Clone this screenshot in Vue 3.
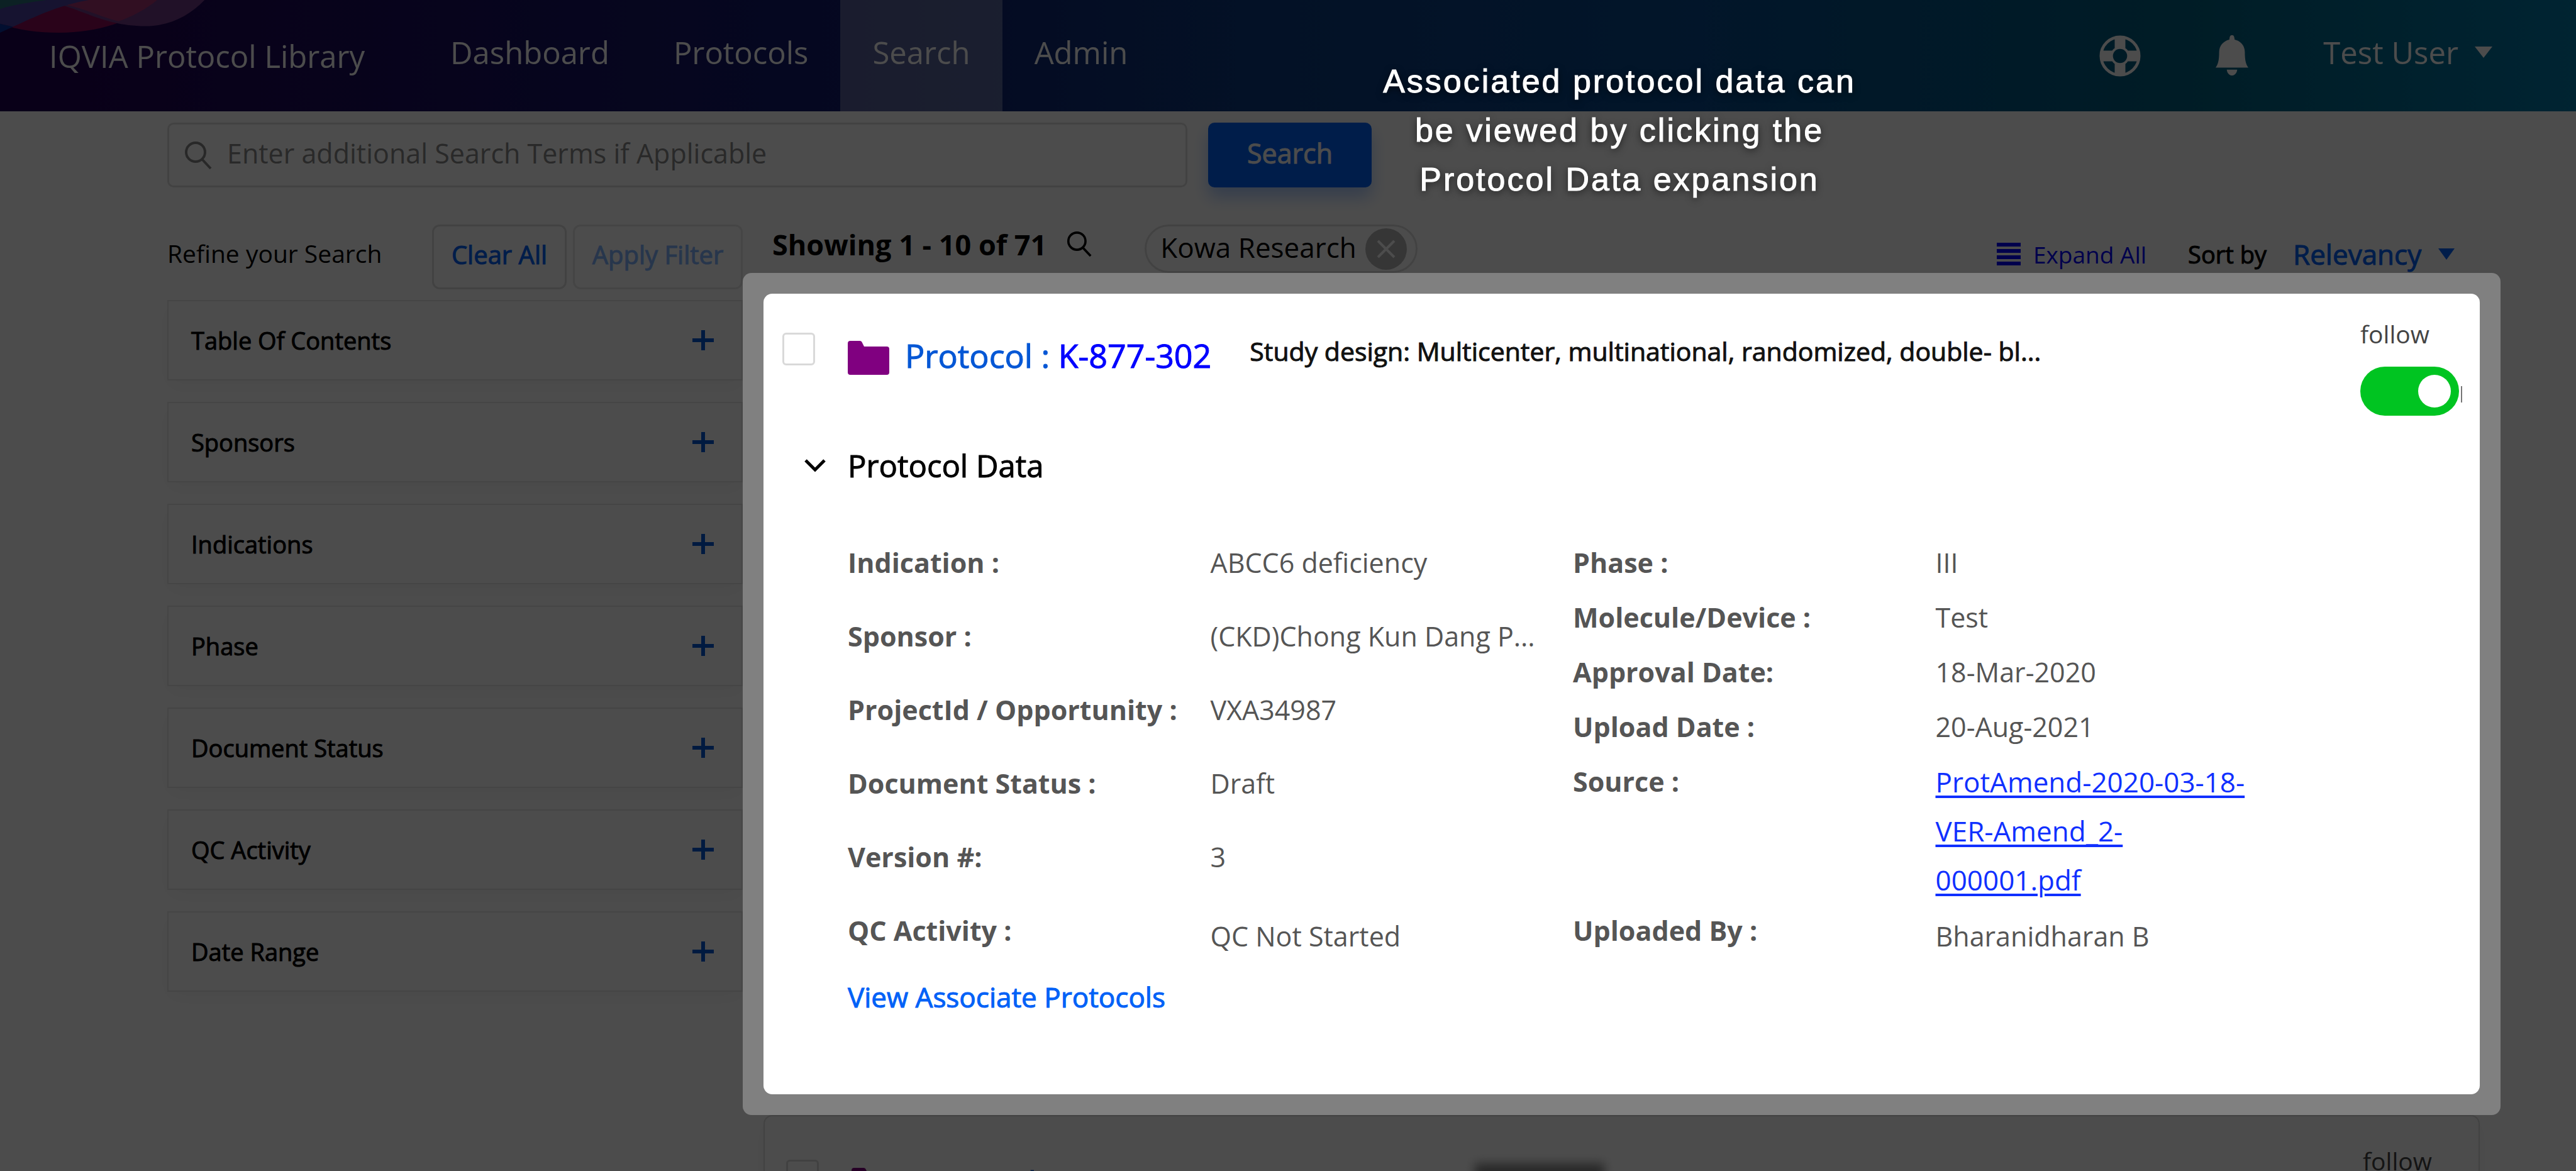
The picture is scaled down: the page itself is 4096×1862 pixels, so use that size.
<script setup>
import { ref } from 'vue'

const navItems = ['Dashboard', 'Protocols', 'Search', 'Admin']
const activeNav = 'Search'

const filters = [
  'Table Of Contents',
  'Sponsors',
  'Indications',
  'Phase',
  'Document Status',
  'QC Activity',
  'Date Range',
]

const leftDetails = [
  { label: 'Indication :', value: 'ABCC6 deficiency' },
  { label: 'Sponsor :', value: '(CKD)Chong Kun Dang P...' },
  { label: 'ProjectId / Opportunity :', value: 'VXA34987' },
  { label: 'Document Status :', value: 'Draft' },
  { label: 'Version #:', value: '3' },
  { label: 'QC Activity :', value: 'QC Not Started', lowered: true },
]

const rightDetails = [
  { label: 'Phase :', value: 'III' },
  { label: 'Molecule/Device :', value: 'Test' },
  { label: 'Approval Date:', value: '18-Mar-2020' },
  { label: 'Upload Date :', value: '20-Aug-2021' },
  { label: 'Source :', file: ['ProtAmend-2020-03-18-', 'VER-Amend_2-', '000001.pdf'] },
  { label: 'Uploaded By :', value: 'Bharanidharan B', lowered: true },
]

const searchTerm = ref('')
const sortBy = ref('Relevancy')
const following = ref(true)
const followingNext = ref(false)
const selected = ref(false)
const selectedNext = ref(false)
</script>

<template>
  <div class="page">
    <header class="topbar">
      <svg class="swirl" viewBox="0 0 350 56" aria-hidden="true">
        <path d="M0 0H265C225 36 165 55 100 55C65 55 30 51 0 40Z" fill="#8c0d58" />
        <path d="M60 0C130 6 165 44 245 44C285 44 318 28 345 0Z" fill="#6e3985" />
        <path d="M60 0C130 6 160 26 200 36C225 27 247 15 265 0Z" fill="#a63273" />
        <path d="M0 0H150C95 10 60 28 22 45L0 40Z" fill="#4a42a0" />
        <path d="M0 40L22 45L0 55Z" fill="#0835a0" />
        <path d="M0 0H78C50 4 22 8 0 15Z" fill="#287178" />
      </svg>
      <a class="brand" href="#">IQVIA Protocol Library</a>
      <nav class="nav">
        <a
          v-for="item in navItems"
          :key="item"
          href="#"
          class="nav-item"
          :class="{ active: item === activeNav }"
        >{{ item }}</a>
      </nav>
      <div class="tools">
        <button class="icon-button" aria-label="Help">
          <svg class="ring-icon" viewBox="0 0 70 70">
            <g fill="none" stroke="currentColor">
              <circle cx="35" cy="35" r="32" stroke-width="5" />
              <circle cx="35" cy="35" r="14" stroke-width="4" />
              <path d="M35 2V22M35 48V68M2 35H22M48 35H68" stroke-width="18" />
            </g>
          </svg>
        </button>
        <button class="icon-button" aria-label="Notifications">
          <svg class="bell-icon" viewBox="0 0 56 70">
            <path
              d="M28 0C31 0 32 2 32.500 7.500C43 10 50 18 50 29C50 43 52 50 56 55.500H0C4 50 6 43 6 29C6 18 13 10 23.500 7.500C24 2 25 0 28 0ZM19 59H37C36 66 32 69 28 69C24 69 20 66 19 59Z"
              fill="currentColor"
            />
          </svg>
        </button>
        <button class="user-menu">
          <span>Test User</span>
          <svg class="user-caret" viewBox="0 0 28 18"><path d="M0 0H28L14 18Z" fill="currentColor" /></svg>
        </button>
      </div>
    </header>

    <form class="searchbar" @submit.prevent>
      <label class="search-field">
        <svg class="search-icon" viewBox="0 0 44 46">
          <g fill="none" stroke="currentColor" stroke-width="4">
            <circle cx="18" cy="18" r="15" />
            <path d="M28 29L42 44" />
          </g>
        </svg>
        <input
          v-model="searchTerm"
          class="search-input"
          type="text"
          aria-label="Search terms"
          placeholder="Enter additional Search Terms if Applicable"
        />
      </label>
      <button class="search-button medium" type="submit">Search</button>
    </form>

    <div class="columns">
      <aside class="sidebar">
        <div class="refine">
          <span class="refine-title">Refine your Search</span>
          <button class="refine-button medium">Clear All</button>
          <button class="refine-button apply medium" disabled>Apply Filter</button>
        </div>
        <div class="filters">
          <button v-for="name in filters" :key="name" class="filter medium">
            <span>{{ name }}</span>
            <svg class="plus" viewBox="0 0 34 34">
              <path d="M17 1V33M0 17H34" fill="none" stroke="currentColor" stroke-width="6" />
            </svg>
          </button>
        </div>
      </aside>

      <main class="results">
        <div class="results-head">
          <h1 class="count">Showing 1 - 10 of 71</h1>
          <svg class="count-icon" viewBox="0 0 44 46">
            <g fill="none" stroke="currentColor" stroke-width="4">
              <circle cx="18" cy="18" r="15" />
              <path d="M28 29L42 44" />
            </g>
          </svg>
          <div class="chip">
            <span class="chip-text">Kowa Research</span>
            <button class="chip-close" aria-label="Remove Kowa Research">
              <svg viewBox="0 0 66 66">
                <path d="M20 20L46 46M46 20L20 46" fill="none" stroke="currentColor" stroke-width="4" />
              </svg>
            </button>
          </div>
          <div class="sorting">
            <a class="expand" href="#">
              <svg class="bars" viewBox="0 0 38 36">
                <path d="M0 3H38M0 13H38M0 23H38M0 33H38" stroke="currentColor" stroke-width="6" />
              </svg>
              <span>Expand All</span>
            </a>
            <label class="sort-label medium" for="sort">Sort by</label>
            <span class="sort-control">
              <select id="sort" v-model="sortBy" class="sort medium">
                <option>Relevancy</option>
              </select>
              <svg class="sort-caret" viewBox="0 0 26 18"><path d="M0 0H26L13 18Z" fill="currentColor" /></svg>
            </span>
          </div>
        </div>

        <div class="spotlight">
          <article class="card">
            <div class="card-head">
              <input v-model="selected" class="tick" type="checkbox" aria-label="Select protocol K-877-302" />
              <svg class="folder" viewBox="0 0 66 54">
                <path d="M4 0H19Q22 0 23 3L26 9H62Q66 9 66 13V50Q66 54 62 54H4Q0 54 0 50V4Q0 0 4 0Z" fill="currentColor" />
              </svg>
              <h2 class="title medium">Protocol : <a class="title-link" href="#">K-877-302</a></h2>
              <p class="summary medium">Study design: Multicenter, multinational, randomized, double- bl...</p>
              <label class="follow">
                <span>follow</span>
                <input v-model="following" class="switch" type="checkbox" role="switch" />
              </label>
            </div>

            <button class="section-toggle medium">
              <svg class="chevron" viewBox="0 0 34 22">
                <path d="M2 3L17 18L32 3" fill="none" stroke="currentColor" stroke-width="5" />
              </svg>
              <span>Protocol Data</span>
            </button>

            <div class="details">
              <dl class="detail-list spaced">
                <div v-for="row in leftDetails" :key="row.label" class="detail">
                  <dt>{{ row.label }}</dt>
                  <dd :class="{ lowered: row.lowered }">{{ row.value }}</dd>
                </div>
              </dl>
              <dl class="detail-list">
                <div v-for="row in rightDetails" :key="row.label" class="detail" :class="{ file: row.file }">
                  <dt>{{ row.label }}</dt>
                  <dd v-if="row.file">
                    <a class="file-link" href="#"><template v-for="part in row.file" :key="part">{{ part }}<wbr /></template></a>
                  </dd>
                  <dd v-else :class="{ lowered: row.lowered }">{{ row.value }}</dd>
                </div>
              </dl>
            </div>
            <a class="associate medium" href="#">View Associate Protocols</a>
          </article>
        </div>

        <article class="card next-card">
          <div class="card-head">
            <input v-model="selectedNext" class="tick" type="checkbox" aria-label="Select next protocol" />
            <svg class="folder" viewBox="0 0 66 54">
              <path d="M4 0H19Q22 0 23 3L26 9H62Q66 9 66 13V50Q66 54 62 54H4Q0 54 0 50V4Q0 0 4 0Z" fill="currentColor" />
            </svg>
            <h2 class="title medium">Protocol :</h2>
            <p class="next-text">K-877-302</p>
            <span class="redacted"></span>
            <label class="follow">
              <span>follow</span>
              <input v-model="followingNext" class="switch" type="checkbox" role="switch" />
            </label>
          </div>
        </article>
      </main>
    </div>

    <div class="backdrop"></div>
    <p class="callout medium" role="tooltip">
      Associated protocol data can<br />be viewed by clicking the<br />Protocol Data expansion
    </p>
  </div>
</template>

<style>
body {
  margin: 0;
}
</style>

<style scoped>
.page {
  position: relative;
  height: 100vh;
  overflow: hidden;
  background: #fff;
  color: #000;
  font-family: "Open Sans", "Noto Sans", sans-serif;
}
.page * {
  box-sizing: border-box;
}
button,
input,
select {
  margin: 0;
  padding: 0;
  border: 0;
  background: none;
  color: inherit;
  font: inherit;
}
a {
  color: inherit;
  text-decoration: none;
}
h1,
h2,
p,
dl,
dd {
  margin: 0;
}
svg {
  display: block;
  flex: none;
}
.medium {
  -webkit-text-stroke: 1px currentColor;
}

/* top bar */
.topbar {
  position: relative;
  display: flex;
  align-items: stretch;
  height: 177px;
  padding: 0 133px 0 78px;
  color: #fff;
  background: linear-gradient(90deg, #210050 0%, #111b6e 33%, #0d397f 48%, #07498c 66%, #00607f 85%, #0078a7 100%);
}
.swirl {
  position: absolute;
  top: 0;
  left: 0;
  width: 330px;
  height: 53px;
}
.brand {
  align-self: center;
  width: 587px;
  font-size: 49px;
  line-height: 68px;
}
.nav {
  display: flex;
}
.nav-item {
  display: flex;
  align-items: center;
  padding: 0 51px 11px;
  font-size: 49px;
}
.nav-item.active {
  background: rgba(255, 255, 255, 0.3);
}
.tools {
  display: flex;
  align-items: center;
  margin-left: auto;
}
.icon-button {
  margin-right: 119px;
}
.ring-icon {
  width: 66px;
  height: 66px;
}
.bell-icon {
  width: 52px;
  height: 65px;
}
.user-menu {
  display: flex;
  align-items: center;
  gap: 26px;
  padding-bottom: 11px;
  font-size: 49px;
}
.user-caret {
  width: 28px;
  height: 18px;
}

/* search row */
.searchbar {
  display: flex;
  gap: 33px;
  padding: 18px 153px 57px 266px;
}
.search-field {
  display: flex;
  align-items: center;
  gap: 24px;
  flex: 0 1 1622px;
  height: 103px;
  padding: 0 24px;
  border: 3px solid #dedede;
  border-radius: 10px;
  color: #888;
}
.search-icon {
  width: 44px;
  height: 46px;
}
.search-input {
  flex: 1;
  height: 90px;
  padding-bottom: 6px;
  outline: none;
  font-size: 43px;
}
.search-input::placeholder {
  color: #8a8a8a;
  opacity: 1;
}
.search-button {
  width: 260px;
  height: 103px;
  padding-bottom: 6px;
  border-radius: 10px;
  background: #0061f7;
  box-shadow: 0 16px 26px rgba(0, 97, 247, 0.3);
  color: #fff;
  font-size: 43px;
}

/* sidebar */
.columns {
  display: flex;
  gap: 33px;
  padding: 0 153px 0 266px;
}
.sidebar {
  flex: 0 0 915px;
  padding-top: 2px;
}
.refine {
  display: flex;
  margin-bottom: 17px;
}
.refine-title {
  flex: 1;
  padding-top: 18px;
  font-size: 39px;
  line-height: 56px;
}
.refine-button {
  width: 214px;
  height: 103px;
  padding-bottom: 8px;
  border: 3px solid #dedede;
  border-radius: 12px;
  color: #0061f7;
  font-size: 40px;
}
.refine-button.apply {
  width: 270px;
  margin-left: 10px;
  border-color: #e8e8e8;
  color: #83b4fe;
}
.filters {
  display: flex;
  flex-direction: column;
  gap: 34px;
}
.filter {
  display: flex;
  align-items: center;
  justify-content: space-between;
  height: 128px;
  padding: 0 44px 0 36px;
  border: 2px solid #e8e8e8;
  box-shadow: 0 10px 30px rgba(0, 0, 0, 0.04);
  font-size: 38px;
}
.plus {
  width: 34px;
  height: 34px;
  color: #0057d8;
}

/* results header */
.results {
  flex: 1;
  min-width: 0;
}
.results-head {
  display: flex;
  height: 112px;
  padding: 2px 40px 0 14px;
}
.count {
  font-size: 45px;
  font-weight: 700;
  line-height: 64px;
}
.count-icon {
  width: 40px;
  height: 42px;
  margin: 10px 84px 0 32px;
}
.chip {
  display: flex;
  align-items: center;
  gap: 14px;
  height: 77px;
  padding: 0 14px 0 22px;
  border: 3px solid #dedede;
  border-radius: 40px;
  font-size: 44px;
}
.chip-text {
  padding-bottom: 6px;
}
.chip-close {
  width: 66px;
  height: 66px;
  border-radius: 50%;
  background: #b4b4b4;
  color: #fff;
}
.sorting {
  display: flex;
  align-items: center;
  height: 94px;
  margin-left: auto;
  font-size: 38px;
}
.expand {
  display: flex;
  align-items: center;
  gap: 20px;
  margin-right: 66px;
  color: #0000ff;
  font-size: 37px;
}
.bars {
  width: 38px;
  height: 36px;
}
.sort-label {
  margin-right: 42px;
}
.sort-control {
  display: flex;
  align-items: center;
  gap: 26px;
  color: #0061f7;
}
.sort {
  appearance: none;
  outline: none;
  font-size: 44px;
}
.sort-caret {
  width: 26px;
  height: 18px;
}

/* highlighted result */
.spotlight {
  position: relative;
  z-index: 2;
  margin: -33px;
  padding: 33px;
  border-radius: 14px;
  background: #808080;
}
.card {
  padding: 40px 33px 116px 30px;
  border-radius: 14px;
  background: #fff;
}
.card-head {
  display: flex;
  align-items: flex-start;
  height: 201px;
}
.tick {
  appearance: none;
  flex: none;
  width: 52px;
  height: 52px;
  margin: 22px 52px 0 0;
  border: 3px solid #d9d9d9;
  border-radius: 6px;
  background: #fff;
}
.folder {
  width: 66px;
  height: 54px;
  margin: 35px 25px 0 0;
  color: #800080;
}
.title {
  color: #0557d5;
  font-size: 52px;
  font-weight: 400;
  line-height: 64px;
  padding-top: 26px;
  white-space: nowrap;
}
.title-link {
  color: #0000ff;
}
.summary {
  margin-left: 61px;
  padding-top: 23px;
  color: #111;
  font-size: 41px;
  line-height: 56px;
  white-space: nowrap;
}
.follow {
  position: relative;
  display: flex;
  flex-direction: column;
  gap: 28px;
  margin-left: auto;
  color: #444;
  font-size: 39px;
  line-height: 48px;
}
.switch {
  appearance: none;
  position: relative;
  width: 157px;
  height: 78px;
  border-radius: 39px;
  background: #ccc;
}
.switch::before {
  content: "";
  position: absolute;
  top: 13px;
  left: 13px;
  width: 52px;
  height: 52px;
  border-radius: 50%;
  background: #fff;
}
.switch:checked {
  background: #00c421;
}
.switch:checked::before {
  left: auto;
  right: 13px;
}
.switch:checked::after {
  content: "";
  position: absolute;
  top: 31px;
  right: -5px;
  width: 2px;
  height: 26px;
  background: #777;
}
.section-toggle {
  display: flex;
  align-items: center;
  gap: 35px;
  margin-left: 35px;
  font-size: 49px;
  line-height: 64px;
}
.chevron {
  width: 34px;
  height: 22px;
}
.details {
  display: flex;
  margin: 84px 256px 0 104px;
}
.detail-list {
  flex: 1 1 0;
  min-width: 0;
}
.detail {
  display: flex;
  margin-bottom: 9px;
  color: #555;
  font-size: 43px;
  line-height: 78px;
}
.spaced .detail {
  margin-bottom: 39px;
}
.detail.file {
  margin-bottom: 3px;
}
.detail-list .detail:last-child {
  margin-bottom: 0;
}
.detail dt {
  flex: 0 0 50%;
  font-weight: 700;
  white-space: nowrap;
}
.detail dd {
  flex: 0 0 50%;
  white-space: nowrap;
}
.detail.file dd {
  padding-right: 64px;
  font-size: 44px;
  white-space: normal;
}
.detail dd.lowered {
  padding-top: 9px;
}
.file-link {
  color: #1030ff;
  text-decoration: underline;
  text-decoration-thickness: 4px;
  text-underline-offset: 5px;
}
.associate {
  display: inline-block;
  margin: 18px 0 0 104px;
  color: #0061f7;
  font-size: 44px;
  line-height: 78px;
}

/* following result, cut by the window edge */
.next-card {
  margin-top: 33px;
  padding: 47px 27px 0 34px;
  border: 2px solid #dedede;
  box-shadow: 0 10px 30px rgba(0, 0, 0, 0.04);
}
.next-text {
  margin-left: 334px;
  padding-top: 26px;
  color: #333;
  font-size: 52px;
  line-height: 64px;
}
.redacted {
  width: 206px;
  height: 80px;
  margin: 28px 0 0 92px;
  background: #888;
  filter: blur(8px);
}

/* guided-tour layer */
.backdrop {
  position: absolute;
  inset: 0;
  z-index: 1;
  background: rgba(0, 0, 0, 0.7);
}
.callout {
  position: absolute;
  z-index: 3;
  top: 90px;
  left: 2180px;
  width: 790px;
  color: #fff;
  font-family: "Liberation Sans", Arial, sans-serif;
  font-size: 52px;
  letter-spacing: 3px;
  line-height: 78px;
  text-align: center;
  text-shadow: 0 3px 12px rgba(0, 0, 0, 0.7);
}
</style>
